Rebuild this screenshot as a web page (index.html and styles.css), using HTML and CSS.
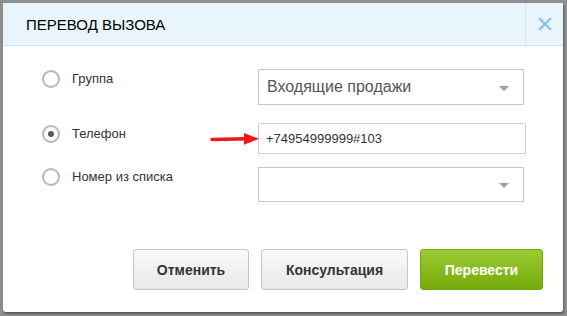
FILE: index.html
```html
<!DOCTYPE html>
<html lang="ru">
<head>
    <meta charset="UTF-8">
    <title>Перевод вызова</title>
    <link rel="stylesheet" href="styles.css">
</head>
<body>

    <div class="dialog">
        <div class="dialog-header">
            <div class="dialog-title">ПЕРЕВОД ВЫЗОВА</div>
            <div class="dialog-close">
                <svg width="14" height="14" viewBox="0 0 14 14">
                    <path d="M2 2 L12 12 M12 2 L2 12" stroke="#8fc1de" stroke-width="2.4" stroke-linecap="square"/>
                </svg>
            </div>
        </div>

        <div class="dialog-body">
            <div class="form-row row-group">
                <span class="radio"></span>
                <span class="label">Группа</span>
                <div class="field select">
                    <span class="select-text">Входящие продажи</span>
                    <span class="caret"></span>
                </div>
            </div>

            <div class="form-row row-phone">
                <span class="radio checked"></span>
                <span class="label">Телефон</span>
                <div class="field input">+74954999999#103</div>
                <!-- стрелка-пометка поверх формы -->
                <svg class="pointer" width="50" height="14" viewBox="0 0 50 14">
                    <path d="M2 7.5 L37 6.8" stroke="#f21616" stroke-width="3.6" stroke-linecap="round"/>
                    <path d="M34 1 L49 6.8 L34 12.8 Z" fill="#f21616"/>
                </svg>
            </div>

            <div class="form-row row-list">
                <span class="radio"></span>
                <span class="label">Номер из списка</span>
                <div class="field select">
                    <span class="select-text"></span>
                    <span class="caret"></span>
                </div>
            </div>

            <div class="buttons">
                <button class="btn btn-cancel">Отменить</button>
                <button class="btn btn-consult">Консультация</button>
                <button class="btn btn-primary">Перевести</button>
            </div>
        </div>
    </div>

</body>
</html>
```

FILE: styles.css
```css
html, body {
    margin: 0;
    height: 100%;
}
body {
    background: #8e8e8e;
    padding: 3px 4px 4px 3px;
    box-sizing: border-box;
    font-family: "Liberation Sans", Arial, sans-serif;
}
.dialog {
    width: 560px;
    height: 309px;
    background: #fff;
    border-radius: 0 0 3px 3px;
    box-shadow: 1px 2px 2px rgba(0, 0, 0, 0.35);
    display: flex;
    flex-direction: column;
}
.dialog-header {
    height: 42px;
    background: #e8f5fd;
    border-bottom: 1px solid #d3e5f1;
    display: flex;
    align-items: stretch;
}
.dialog-title {
    flex: 1;
    padding-left: 23px;
    display: flex;
    align-items: center;
    font-size: 15px;
    color: #000;
}
.dialog-close {
    width: 37px;
    border-left: 1px solid #d3e5f1;
    display: flex;
    align-items: center;
    justify-content: center;
}
.dialog-body {
    padding: 23px 20px 0 39px;
}
.form-row {
    position: relative;
    display: flex;
    align-items: flex-start;
}
.row-phone {
    margin-top: 18px;
}
.row-list {
    margin-top: 13px;
}
.radio {
    width: 14px;
    height: 14px;
    border: 2px solid #b8b8b8;
    border-radius: 50%;
    background: radial-gradient(circle, #fff 55%, #ececec 100%);
    display: flex;
    align-items: center;
    justify-content: center;
    margin-top: 1px;
}
.row-phone .radio {
    margin-top: 2px;
}
.radio.checked::after {
    content: "";
    width: 6px;
    height: 6px;
    border-radius: 50%;
    background: #5a5a5a;
}
.label {
    width: 186px;
    margin-left: 12px;
    font-size: 13px;
    line-height: 18px;
    color: #333;
}
.row-phone .label {
    margin-top: 2px;
}
.row-group .label, .row-list .label {
    margin-top: 1px;
}
.field {
    width: 266px;
    border: 1px solid #c9c9c9;
    background: #fff;
    box-sizing: border-box;
}
.select {
    display: flex;
    align-items: center;
    justify-content: space-between;
    padding: 0 14px 0 8px;
}
.row-group .select {
    height: 36px;
}
.row-list .select {
    height: 35px;
}
.select-text {
    font-size: 16px;
    color: #555;
}
.caret {
    width: 0;
    height: 0;
    border-left: 5px solid transparent;
    border-right: 5px solid transparent;
    border-top: 5px solid #a0a0a0;
    margin-top: 2px;
}
.input {
    height: 31px;
    width: 268px;
    padding: 0 7px;
    display: flex;
    align-items: center;
    font-size: 13px;
    color: #333;
    border-color: #d0d0d0;
}
.pointer {
    position: absolute;
    left: 168px;
    top: 9px;
}
.buttons {
    margin-top: 47px;
    display: flex;
    justify-content: flex-end;
    gap: 12px;
}
.btn {
    height: 41px;
    border-radius: 3px;
    font-family: "Liberation Sans", Arial, sans-serif;
    font-size: 14px;
    font-weight: bold;
    color: #333;
    border: 1px solid #c6c6c6;
    background: linear-gradient(#fafafa, #e8e8e8);
    cursor: pointer;
}
.btn-cancel {
    width: 116px;
}
.btn-consult {
    width: 147px;
}
.btn-primary {
    width: 123px;
    color: #fff;
    border: 1px solid #72a80e;
    background: linear-gradient(#9bcc33, #74aa08);
}
```
